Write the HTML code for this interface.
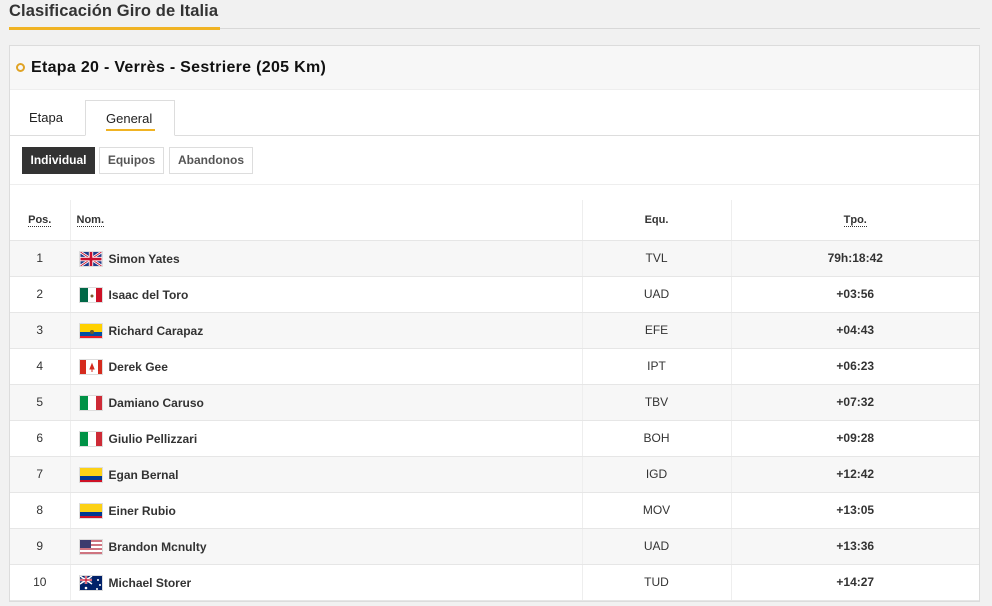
<!DOCTYPE html>
<html><head><meta charset="utf-8"><style>
*{margin:0;padding:0;box-sizing:border-box}
body{width:992px;height:606px;background:#f1f1f1;font-family:"Liberation Sans",sans-serif;color:#222;position:relative;overflow:hidden}
.title{position:absolute;left:9px;top:2px;font-size:16.5px;font-weight:bold;color:#333;letter-spacing:0.1px}
.tline{position:absolute;left:9px;top:28px;width:971px;height:1px;background:#d8d8d8}
.tul{position:absolute;left:9px;top:27px;width:211px;height:3px;background:#f0b323}
.panel{position:absolute;left:9px;top:45px;width:971px;height:557px;background:#fff;border:1px solid #dcdcdc}
.head{height:44px;background:#f7f7f7;border-bottom:1px solid #eee;position:relative}
.head .c{position:absolute;left:6px;top:17px;width:9px;height:9px;border:2px solid #e0a325;border-radius:50%}
.head .t{position:absolute;left:21px;top:13px;font-size:16px;font-weight:bold;color:#111;letter-spacing:0.3px}
.tabs{position:absolute;top:54px;left:0;width:969px;height:36px;border-bottom:1px solid #ddd}
.tab{position:absolute;font-size:13px;color:#222;top:10px}
.tabg{position:absolute;left:75px;top:0;width:90px;height:36px;border:1px solid #ddd;border-bottom:1px solid #fff;background:#fff}
.tabg span{position:absolute;left:20px;top:10px;font-size:13px}
.tabg i{position:absolute;left:20px;top:28px;width:49px;height:2px;background:#f0b323}
.btn{position:absolute;top:101px;height:27px;border:1px solid #ddd;font-size:12px;font-weight:bold;color:#555;line-height:25px;text-align:center}
.sep{position:absolute;left:0;top:138px;width:969px;height:1px;background:#eee}
table{position:absolute;left:0;top:154px;width:969px;border-collapse:collapse;font-size:12px}
th{height:40px;font-weight:bold;font-size:11px;color:#333;border-left:1px solid #eee;border-bottom:1px solid #e6e6e6;padding-top:0px}
th:first-child{border-left:none}
th span{border-bottom:1px dotted #333}
td{height:36px;border-left:1px solid #eee;border-bottom:1px solid #e6e6e6;color:#333}
td:first-child{border-left:none}
tr.o td{background:#f7f7f7}
.p{text-align:center;width:60px}
.n{padding-left:8px;font-weight:bold;color:#333}
.n div{display:flex;align-items:center;padding-top:2px}
.n svg{margin-right:6px;border:1px solid #ddd;flex:none}
.e{text-align:center;width:149px}
.tm{text-align:center;font-weight:bold}
</style></head><body>
<div class="title">Clasificación Giro de Italia</div>
<div class="tline"></div><div class="tul"></div>
<div class="panel">
<div class="head"><div class="c"></div><div class="t">Etapa 20 - Verrès - Sestriere (205 Km)</div></div>
<div class="tabs"><div class="tab" style="left:19px">Etapa</div><div class="tabg"><span>General</span><i></i></div></div>
<div class="btn" style="left:12px;width:73px;background:#333;color:#fff;border-color:#333">Individual</div>
<div class="btn" style="left:89px;width:65px">Equipos</div>
<div class="btn" style="left:159px;width:84px">Abandonos</div>
<div class="sep"></div>
<table>
<tr><th class="p" style="padding-left:0"><span>Pos.</span></th><th style="text-align:left;padding-left:6px;width:512px"><span>Nom.</span></th><th class="e">Equ.</th><th><span>Tpo.</span></th></tr>
<tr class="o"><td class="p">1</td><td class="n"><div><svg width="24" height="16" viewBox="0 0 24 16"><rect width="24" height="16" fill="#1e3a8a"/><path d="M0 0L24 16M24 0L0 16" stroke="#fff" stroke-width="3"/><path d="M0 0L24 16M24 0L0 16" stroke="#c8102e" stroke-width="1"/><path d="M12 0V16M0 8H24" stroke="#fff" stroke-width="5"/><path d="M12 0V16M0 8H24" stroke="#c8102e" stroke-width="3"/></svg>Simon Yates</div></td><td class="e">TVL</td><td class="tm">79h:18:42</td></tr>
<tr><td class="p">2</td><td class="n"><div><svg width="24" height="16"><rect width="8" height="16" fill="#006847"/><rect x="8" width="8" height="16" fill="#fff"/><rect x="16" width="8" height="16" fill="#ce1126"/><circle cx="12" cy="8" r="1.5" fill="#7a5c2e"/></svg>Isaac del Toro</div></td><td class="e">UAD</td><td class="tm">+03:56</td></tr>
<tr class="o"><td class="p">3</td><td class="n"><div><svg width="24" height="16"><rect width="24" height="8" fill="#ffd100"/><rect y="8" width="24" height="4" fill="#034ea2"/><rect y="12" width="24" height="4" fill="#ed1c24"/><circle cx="12" cy="8" r="2" fill="#6b5a2a"/></svg>Richard Carapaz</div></td><td class="e">EFE</td><td class="tm">+04:43</td></tr>
<tr><td class="p">4</td><td class="n"><div><svg width="24" height="16"><rect width="24" height="16" fill="#fff"/><rect width="6" height="16" fill="#d52b1e"/><rect x="18" width="6" height="16" fill="#d52b1e"/><path d="M12 4L14 9H10Z M12 9V12" fill="#d52b1e" stroke="#d52b1e"/></svg>Derek Gee</div></td><td class="e">IPT</td><td class="tm">+06:23</td></tr>
<tr class="o"><td class="p">5</td><td class="n"><div><svg width="24" height="16"><rect width="8" height="16" fill="#009246"/><rect x="8" width="8" height="16" fill="#fff"/><rect x="16" width="8" height="16" fill="#ce2b37"/></svg>Damiano Caruso</div></td><td class="e">TBV</td><td class="tm">+07:32</td></tr>
<tr><td class="p">6</td><td class="n"><div><svg width="24" height="16"><rect width="8" height="16" fill="#009246"/><rect x="8" width="8" height="16" fill="#fff"/><rect x="16" width="8" height="16" fill="#ce2b37"/></svg>Giulio Pellizzari</div></td><td class="e">BOH</td><td class="tm">+09:28</td></tr>
<tr class="o"><td class="p">7</td><td class="n"><div><svg width="24" height="16"><rect width="24" height="8" fill="#fcd116"/><rect y="8" width="24" height="4" fill="#003893"/><rect y="12" width="24" height="4" fill="#ce1126"/></svg>Egan Bernal</div></td><td class="e">IGD</td><td class="tm">+12:42</td></tr>
<tr><td class="p">8</td><td class="n"><div><svg width="24" height="16"><rect width="24" height="8" fill="#fcd116"/><rect y="8" width="24" height="4" fill="#003893"/><rect y="12" width="24" height="4" fill="#ce1126"/></svg>Einer Rubio</div></td><td class="e">MOV</td><td class="tm">+13:05</td></tr>
<tr class="o"><td class="p">9</td><td class="n"><div><svg width="24" height="16"><rect width="24" height="16" fill="#fff"/><path d="M0 1H24M0 5H24M0 9H24M0 13H24" stroke="#b22234" stroke-width="1.3"/><rect width="11" height="8" fill="#3c3b6e"/></svg>Brandon Mcnulty</div></td><td class="e">UAD</td><td class="tm">+13:36</td></tr>
<tr><td class="p">10</td><td class="n"><div><svg width="24" height="16"><rect width="24" height="16" fill="#012169"/><path d="M0 0L12 8M12 0L0 8" stroke="#fff" stroke-width="1.5"/><path d="M6 0V8M0 4H12" stroke="#fff" stroke-width="2.5"/><path d="M6 0V8M0 4H12" stroke="#c8102e" stroke-width="1.2"/><circle cx="6" cy="12" r="1.3" fill="#fff"/><circle cx="18" cy="4" r="1" fill="#fff"/><circle cx="20" cy="9" r="1" fill="#fff"/><circle cx="17" cy="13" r="1" fill="#fff"/></svg>Michael Storer</div></td><td class="e">TUD</td><td class="tm">+14:27</td></tr>
</table>
</div>
</body></html>
